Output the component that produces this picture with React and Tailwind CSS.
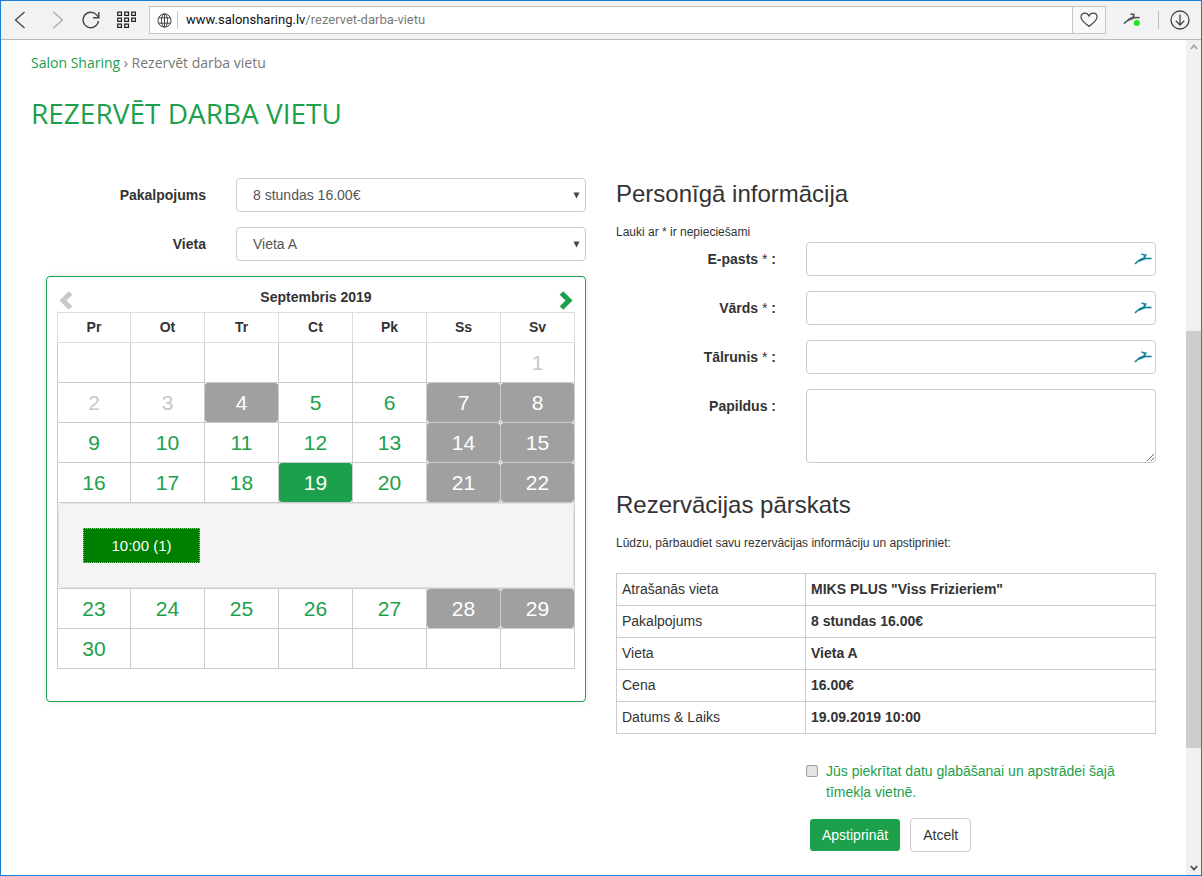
import React, { useState } from 'react';

const weekDays = ['Pr', 'Ot', 'Tr', 'Ct', 'Pk', 'Ss', 'Sv'];

const weeksBefore = [
  [null, null, null, null, null, null, 1],
  [2, 3, 4, 5, 6, 7, 8],
  [9, 10, 11, 12, 13, 14, 15],
  [16, 17, 18, 19, 20, 21, 22],
];

const weeksAfter = [
  [23, 24, 25, 26, 27, 28, 29],
  [30, null, null, null, null, null, null],
];

const pastDays = [1, 2, 3];
const closedDays = [4, 7, 8, 14, 15, 21, 22, 28, 29];

const BirdIcon = ({ className }) => (
  <svg className={className} viewBox="0 0 18 12" fill="none" stroke="currentColor">
    <path d="M1 10.8 L4.4 8 L9 5.8" strokeWidth="1.5" />
    <path d="M5 7.6 L11 5.2" strokeWidth="2.4" />
    <path d="M9 5.5 H17.6" strokeWidth="1.6" />
    <path d="M10.6 5.4 L10.8 2.4" strokeWidth="2" />
    <path d="M7.4 0.9 L11 2.2 L12.6 1.8" strokeWidth="1.4" />
  </svg>
);

const BrowserBar = () => (
  <div className="flex h-[39px] items-center border-b border-[#b9b9b9] bg-[#f2f2f2] text-[#444]">
    <button aria-label="Back" className="flex h-full w-[38px] shrink-0 items-center justify-center">
      <svg width="12" height="18" viewBox="0 0 12 18" fill="none" stroke="currentColor" strokeWidth="1.3">
        <path d="M10.5 1 L1.5 9 L10.5 17" />
      </svg>
    </button>
    <button aria-label="Forward" className="flex h-full w-[38px] shrink-0 items-center justify-center text-[#a8a8a8]">
      <svg width="12" height="18" viewBox="0 0 12 18" fill="none" stroke="currentColor" strokeWidth="1.3">
        <path d="M1.5 1 L10.5 9 L1.5 17" />
      </svg>
    </button>
    <button aria-label="Reload" className="flex h-full w-[28px] shrink-0 items-center justify-center">
      <svg width="18" height="18" viewBox="0 0 18 18" fill="none" stroke="currentColor" strokeWidth="1.4">
        <path d="M16.4 10 A7.7 7.7 0 1 1 14.6 3.9 L16.8 6.4" />
        <path d="M16.8 1 V6.7 H11" />
      </svg>
    </button>
    <button aria-label="Speed dial" className="flex h-full w-[42px] shrink-0 items-center justify-center">
      <svg width="19" height="18" viewBox="0 0 19 18" fill="none" stroke="#222" strokeWidth="1.2">
        <path d="M0.7 1.1h3.8v3.2H0.7z M7.7 1.1h3.8v3.2H7.7z M14.7 1.1h3.8v3.2h-3.8z" />
        <path d="M0.7 7.1h3.8v3.2H0.7z M7.7 7.1h3.8v3.2H7.7z M14.7 7.1h3.8v3.2h-3.8z" />
        <path d="M0.7 13.1h3.8v3.2H0.7z M7.7 13.1h3.8v3.2H7.7z" />
      </svg>
    </button>
    <div className="ml-0.5 flex h-[28px] flex-1 items-center border border-[#c6c6c6] bg-white">
      <svg className="ml-[7px] shrink-0" width="15" height="15" viewBox="0 0 15 15" fill="none" stroke="currentColor">
        <circle cx="7.5" cy="7.5" r="6.6" />
        <ellipse cx="7.5" cy="7.5" rx="3" ry="6.6" />
        <path d="M7.5 1 V14 M1.8 4.8 H13.2 M1.8 10.2 H13.2" />
      </svg>
      <span className="ml-[5px] h-[18px] w-px bg-[#c6c6c6]"></span>
      <p className="ml-2 flex-1 font-['Roboto',sans-serif] text-[13px] leading-5 text-[#111]">
        www.salonsharing.lv<span className="text-[#7b7b7b]">/rezervet-darba-vietu</span>
      </p>
      <button
        aria-label="Bookmark"
        className="flex h-full w-[33px] items-center justify-center border-l border-[#c6c6c6] bg-[#f8f8f8]"
      >
        <svg width="18" height="16" viewBox="0 0 18 16" fill="none" stroke="currentColor" strokeWidth="1.2">
          <path d="M9 14.4 C6.4 12 1 8.7 1 4.9 C1 2.7 2.7 1.2 4.7 1.2 C6.6 1.2 8.2 2.3 9 4 C9.8 2.3 11.4 1.2 13.3 1.2 C15.3 1.2 17 2.7 17 4.9 C17 8.7 11.6 12 9 14.4 Z" />
        </svg>
      </button>
    </div>
    <button aria-label="Extension" className="flex h-full w-[52px] shrink-0 items-center justify-center">
      <svg width="18" height="16" viewBox="0 0 18 16" fill="none" stroke="#555">
        <path d="M1 11.6 L5 8.2 L9 6.2" strokeWidth="1.5" />
        <path d="M5 8 L11 5.4" strokeWidth="2.4" />
        <path d="M9 5.6 H16.6" strokeWidth="1.6" />
        <path d="M7.4 2 L10.8 2.4 L10.4 5.4" strokeWidth="1.7" />
        <circle cx="13.8" cy="11" r="3" fill="#21e321" stroke="none" />
      </svg>
    </button>
    <span className="h-[18px] w-px bg-[#bdbdbd]"></span>
    <button aria-label="Downloads" className="flex h-full w-[42px] shrink-0 items-center justify-center">
      <svg width="20" height="20" viewBox="0 0 20 20" fill="none" stroke="currentColor" strokeWidth="1.3">
        <circle cx="10" cy="10" r="9" />
        <path d="M10 4.5 V15 M5.8 10.8 L10 15 L14.2 10.8" />
      </svg>
    </button>
  </div>
);

const ScrollBar = () => (
  <div className="flex w-[15px] shrink-0 flex-col items-center bg-[#f0f0f0]">
    <svg className="my-1 h-2 w-2 shrink-0" viewBox="0 0 8 8" fill="none" stroke="#a6a6a6" strokeWidth="1.8">
      <path d="M0.8 5 L4 1.4 L7.2 5" />
    </svg>
    <div className="grow-[275]"></div>
    <div className="w-full grow-[417] bg-[#cdcdcd]"></div>
    <div className="grow-[111]"></div>
    <svg className="my-1 h-2 w-2 shrink-0" viewBox="0 0 8 8" fill="none" stroke="#505050" strokeWidth="1.8">
      <path d="M0.8 3 L4 6.6 L7.2 3" />
    </svg>
  </div>
);

const SelectRow = ({ id, label, option }) => (
  <div className="mb-[15px] flex items-center">
    <label htmlFor={id} className="w-[190px] shrink-0 pr-[30px] text-right font-bold">{label}</label>
    <div className="relative flex-1">
      <select
        id={id}
        className="block h-[34px] w-full appearance-none rounded-[4px] border border-[#ccc] bg-white px-4 text-[#555]"
      >
        <option>{option}</option>
      </select>
      <svg className="pointer-events-none absolute top-[14px] right-[6px] h-[7px] w-[7px]" viewBox="0 0 7 7">
        <path d="M0.5 0.5 H6.5 L3.5 6.5 Z" fill="#444" />
      </svg>
    </div>
  </div>
);

const InputRow = ({ id, label, type }) => (
  <div className="mb-[15px] flex">
    <label htmlFor={id} className="w-[190px] shrink-0 pt-[7px] pr-[30px] text-right font-bold">
      {label} <span className="font-normal">*</span> :
    </label>
    <div className="relative flex-1">
      <input id={id} type={type} className="block h-[34px] w-full rounded-[4px] border border-[#ccc] bg-white px-3" />
      <BirdIcon className="pointer-events-none absolute top-[11px] right-[4px] h-3 w-[18px] text-[#15809b]" />
    </div>
  </div>
);

const DayCell = ({ day, selected, onSelect }) => {
  let style = 'text-[#1da04b]';
  if (pastDays.includes(day)) style = 'text-[#c8c8c8]';
  if (closedDays.includes(day)) style = 'bg-[#a0a0a0] text-white rounded-[3px]';
  if (day === selected) style = 'bg-[#1da04b] text-white rounded-[3px]';

  return (
    <td className="h-10 border border-[#ccc] p-0">
      {day && (
        <button
          disabled={pastDays.includes(day) || closedDays.includes(day)}
          onClick={() => onSelect(day)}
          className={`block h-[39px] w-full text-[21px] leading-[39px] ${style}`}
        >
          {day}
        </button>
      )}
    </td>
  );
};

const Calendar = () => {
  const [selected, setSelected] = useState(19);

  const renderWeek = (week, index) => (
    <tr key={index}>
      {week.map((day, i) => (
        <DayCell key={i} day={day} selected={selected} onSelect={setSelected} />
      ))}
    </tr>
  );

  return (
    <div className="rounded-[4px] border border-[#1da04b] px-[10px] pt-[10px] pb-8 shadow-[0_0_8px_rgba(0,0,0,0.08)]">
      <div className="flex h-[25px] items-start justify-between">
        <button aria-label="Previous month" disabled className="ml-0.5 pt-1 text-[#c8c8c8]">
          <svg width="14" height="19" viewBox="0 0 14 19" fill="none" stroke="currentColor" strokeWidth="5">
            <path d="M11.5 2 L4 9.5 L11.5 17" />
          </svg>
        </button>
        <h2 className="text-[14px] leading-5 font-bold">Septembris 2019</h2>
        <button aria-label="Next month" className="mr-0.5 pt-1 text-[#1da04b]">
          <svg width="14" height="19" viewBox="0 0 14 19" fill="none" stroke="currentColor" strokeWidth="5">
            <path d="M2.5 2 L10 9.5 L2.5 17" />
          </svg>
        </button>
      </div>
      <table className="w-full table-fixed border-collapse text-center">
        <thead>
          <tr>
            {weekDays.map((name) => (
              <th key={name} className="h-[30px] border border-[#ddd] p-0 pb-0.5 font-bold first:w-[73px]">{name}</th>
            ))}
          </tr>
        </thead>
        <tbody>
          {weeksBefore.map(renderWeek)}
          {/* Free times of the selected day */}
          <tr>
            <td colSpan={7} className="h-[86px] border border-[#ccc] p-0">
              <div className="flex h-[85px] items-center rounded-[4px] border border-[#e3e3e3] bg-[#f4f4f4] px-6">
                <button className="h-[35px] w-[117px] border border-dotted border-[#8fc98f] bg-[#008000] text-[15px] text-white">
                  10:00 (1)
                </button>
              </div>
            </td>
          </tr>
          {weeksAfter.map(renderWeek)}
        </tbody>
      </table>
    </div>
  );
};

const summary = [
  ['Atrašanās vieta', 'MIKS PLUS "Viss Frizieriem"'],
  ['Pakalpojums', '8 stundas 16.00€'],
  ['Vieta', 'Vieta A'],
  ['Cena', '16.00€'],
  ['Datums & Laiks', '19.09.2019 10:00'],
];

const BookingForm = () => (
  <form onSubmit={(e) => e.preventDefault()}>
    <h2 className="text-[24px] leading-8">Personīgā informācija</h2>
    <p className="mt-[13px] mb-px text-[12px] leading-[18px]">Lauki ar * ir nepieciešami</p>

    <InputRow id="email" label="E-pasts" type="email" />
    <InputRow id="name" label="Vārds" type="text" />
    <InputRow id="phone" label="Tālrunis" type="tel" />
    <div className="flex">
      <label htmlFor="notes" className="w-[190px] shrink-0 pt-[7px] pr-[30px] text-right font-bold">Papildus :</label>
      <textarea id="notes" className="block h-[74px] flex-1 resize rounded-[4px] border border-[#ccc] bg-white px-3 py-1.5"></textarea>
    </div>

    <h2 className="mt-[26px] text-[24px] leading-8">Rezervācijas pārskats</h2>
    <p className="mt-[13px] mb-[21px] text-[12px] leading-[18px]">
      Lūdzu, pārbaudiet savu rezervācijas informāciju un apstipriniet:
    </p>

    <table className="w-full table-fixed border-collapse text-left">
      <tbody>
        {summary.map(([name, value]) => (
          <tr key={name}>
            <th className="h-8 w-[189px] border border-[#ccc] px-[5px] pt-0 pb-0.5 font-normal">{name}</th>
            <td className="h-8 border border-[#ccc] px-[5px] pt-0 pb-0.5 font-bold">{value}</td>
          </tr>
        ))}
      </tbody>
    </table>

    <div className="mt-[27px] ml-[190px] flex items-start gap-2 text-[#1da04b]">
      <input
        id="consent"
        type="checkbox"
        className="mt-1 h-3 w-3 shrink-0 appearance-none rounded-[2px] border border-[#a0a0a0] bg-[#e4e4e4] checked:bg-[#1da04b]"
      />
      <label htmlFor="consent" className="leading-[21px]">
        Jūs piekrītat datu glabāšanai un apstrādei šajā tīmekļa vietnē.
      </label>
    </div>

    <div className="mt-[15px] ml-[193px] flex gap-[9px]">
      <button type="submit" className="h-[34px] rounded-[4px] border border-white bg-[#1da04b] px-3 text-white">Apstiprināt</button>
      <button type="button" className="h-[34px] rounded-[4px] border border-[#ccc] bg-white px-3 text-[#333]">Atcelt</button>
    </div>
  </form>
);

const App = () => {
  return (
    <div className="flex min-h-screen flex-col border border-[#1a7fd4] bg-white font-['Liberation_Sans',Arial,sans-serif] text-[14px] leading-5 text-[#333]">
      <BrowserBar />

      <div className="flex flex-1">
        <main className="flex-1 pt-[13px] pr-[15px] pb-[22px] pl-[30px]">
          <nav className="font-['Open_Sans',sans-serif] text-[14px] leading-5 text-[#777]">
            <a href="#home" className="text-[#1da04b]">Salon Sharing</a> › Rezervēt darba vietu
          </nav>
          <h1 className="mt-5 mb-[45px] font-['Open_Sans',sans-serif] text-[28px] leading-10 text-[#1da04b] uppercase">
            Rezervēt darba vietu
          </h1>

          <div className="grid grid-cols-2 items-start gap-[30px] px-[15px]">
            <div>
              <SelectRow id="service" label="Pakalpojums" option="8 stundas 16.00€" />
              <SelectRow id="place" label="Vieta" option="Vieta A" />
              <Calendar />
            </div>
            <BookingForm />
          </div>
        </main>
        <ScrollBar />
      </div>
    </div>
  );
};

export default App;
